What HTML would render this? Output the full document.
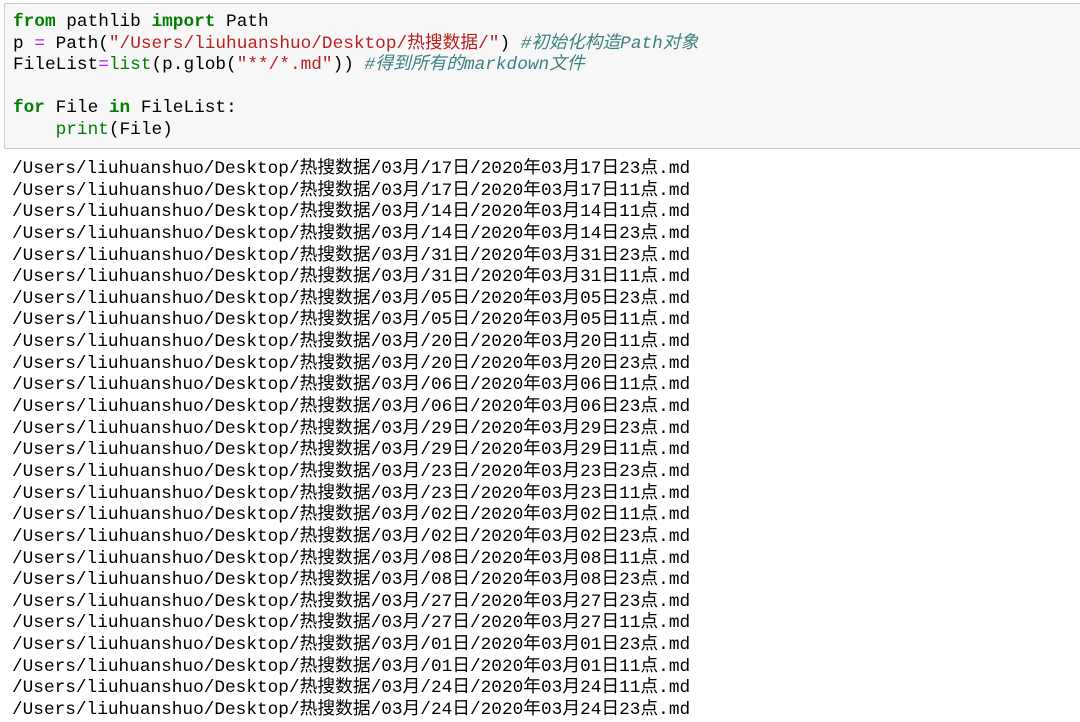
<!DOCTYPE html>
<html><head><meta charset="utf-8"><style>
body{margin:0;width:1080px;height:720px;background:#fff;overflow:hidden;font-family:"Liberation Mono","Noto Sans CJK SC",monospace;font-size:17.75px;color:#000}
.box{position:absolute;left:4px;top:3px;width:1080px;height:144px;background:#f7f7f7;border:1px solid #cfcfcf;border-radius:2px}
.l{position:absolute;left:13px;white-space:pre;line-height:21.6px;height:21.6px}
.k{color:#008000;font-weight:bold}.b{color:#008000}.s{color:#ba2121}.c{color:#408080;font-style:italic}.o{color:#aa22ff}
.out{position:absolute;left:12px;top:159px;white-space:pre;line-height:21.64px}
</style></head><body>
<div class="box"></div>
<div class="l" style="top:12px"><span class="k">from</span> pathlib <span class="k">import</span> Path</div>
<div class="l" style="top:34px">p <span class="o">=</span> Path(<span class="s">"/Users/liuhuanshuo/Desktop/热搜数据/"</span>) <span class="c">#初始化构造Path对象</span></div>
<div class="l" style="top:55px">FileList<span class="o">=</span><span class="b">list</span>(p.glob(<span class="s">"**/*.md"</span>)) <span class="c">#得到所有的markdown文件</span></div>
<div class="l" style="top:98px"><span class="k">for</span> File <span class="k">in</span> FileList:</div>
<div class="l" style="top:120px">    <span class="b">print</span>(File)</div>
<div class="out">/Users/liuhuanshuo/Desktop/热搜数据/03月/17日/2020年03月17日23点.md
/Users/liuhuanshuo/Desktop/热搜数据/03月/17日/2020年03月17日11点.md
/Users/liuhuanshuo/Desktop/热搜数据/03月/14日/2020年03月14日11点.md
/Users/liuhuanshuo/Desktop/热搜数据/03月/14日/2020年03月14日23点.md
/Users/liuhuanshuo/Desktop/热搜数据/03月/31日/2020年03月31日23点.md
/Users/liuhuanshuo/Desktop/热搜数据/03月/31日/2020年03月31日11点.md
/Users/liuhuanshuo/Desktop/热搜数据/03月/05日/2020年03月05日23点.md
/Users/liuhuanshuo/Desktop/热搜数据/03月/05日/2020年03月05日11点.md
/Users/liuhuanshuo/Desktop/热搜数据/03月/20日/2020年03月20日11点.md
/Users/liuhuanshuo/Desktop/热搜数据/03月/20日/2020年03月20日23点.md
/Users/liuhuanshuo/Desktop/热搜数据/03月/06日/2020年03月06日11点.md
/Users/liuhuanshuo/Desktop/热搜数据/03月/06日/2020年03月06日23点.md
/Users/liuhuanshuo/Desktop/热搜数据/03月/29日/2020年03月29日23点.md
/Users/liuhuanshuo/Desktop/热搜数据/03月/29日/2020年03月29日11点.md
/Users/liuhuanshuo/Desktop/热搜数据/03月/23日/2020年03月23日23点.md
/Users/liuhuanshuo/Desktop/热搜数据/03月/23日/2020年03月23日11点.md
/Users/liuhuanshuo/Desktop/热搜数据/03月/02日/2020年03月02日11点.md
/Users/liuhuanshuo/Desktop/热搜数据/03月/02日/2020年03月02日23点.md
/Users/liuhuanshuo/Desktop/热搜数据/03月/08日/2020年03月08日11点.md
/Users/liuhuanshuo/Desktop/热搜数据/03月/08日/2020年03月08日23点.md
/Users/liuhuanshuo/Desktop/热搜数据/03月/27日/2020年03月27日23点.md
/Users/liuhuanshuo/Desktop/热搜数据/03月/27日/2020年03月27日11点.md
/Users/liuhuanshuo/Desktop/热搜数据/03月/01日/2020年03月01日23点.md
/Users/liuhuanshuo/Desktop/热搜数据/03月/01日/2020年03月01日11点.md
/Users/liuhuanshuo/Desktop/热搜数据/03月/24日/2020年03月24日11点.md
/Users/liuhuanshuo/Desktop/热搜数据/03月/24日/2020年03月24日23点.md</div>
</body></html>
